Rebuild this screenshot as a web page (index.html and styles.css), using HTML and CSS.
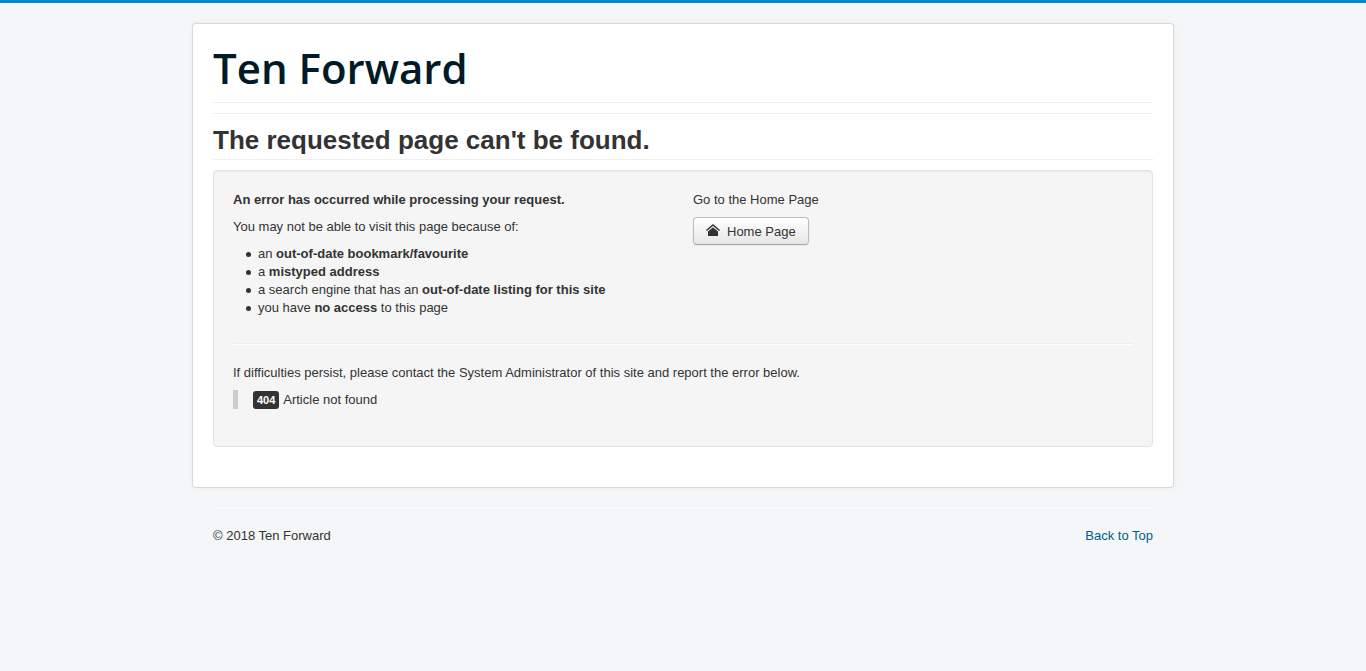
FILE: index.html
```html
<!DOCTYPE html>
<html lang="en">
<head>
<meta charset="utf-8">
<title>The requested page can't be found.</title>
<link rel="stylesheet" href="styles.css">
</head>
<body>
<div class="body" id="top">
  <div class="container">
    <header class="header"><a class="brand" href="#">Ten Forward</a></header>
    <div class="navigation"></div>
    <main>
      <h1 class="page-header">The requested page can't be found.</h1>
      <div class="well">
        <div class="row">
          <div class="col">
            <p><strong>An error has occurred while processing your request.</strong></p>
            <p>You may not be able to visit this page because of:</p>
            <ul class="reasons">
              <li>an <strong>out-of-date bookmark/favourite</strong></li>
              <li>a <strong>mistyped address</strong></li>
              <li>a search engine that has an <strong>out-of-date listing for this site</strong></li>
              <li>you have <strong>no access</strong> to this page</li>
            </ul>
          </div>
          <div class="col">
            <p>Go to the Home Page</p>
            <a class="btn" href="#"><svg class="icon" viewBox="0 0 14 14" aria-hidden="true"><path d="M0.500 7.500 7 2l6.500 5.500" fill="none" stroke="#333" stroke-width="1.500"/><path d="M7 4.300 2 8.500V13h10V8.500z"/></svg>Home Page</a>
          </div>
        </div>
        <hr>
        <p class="contact">If difficulties persist, please contact the System Administrator of this site and report the error below.</p>
        <blockquote><span class="label">404</span> Article not found</blockquote>
      </div>
    </main>
  </div>
</div>
<footer class="footer">
  <hr>
  <div class="footer-row">
    <p>© 2018 Ten Forward</p>
    <p><a href="#top">Back to Top</a></p>
  </div>
</footer>
</body>
</html>
```
FILE: styles.css
```css
* { box-sizing: border-box; }
body {
  margin: 0;
  padding: 20px;
  border-top: 3px solid #0088cc;
  background: #f4f6f7;
  color: #333;
  font: 13px/18px "Liberation Sans", Arial, sans-serif;
}
p { margin: 0 0 9px; }
a { color: #005e8d; text-decoration: none; }
.container {
  max-width: 982px;
  margin: 0 auto;
  padding: 20px 20px 40px;
  background: #fff;
  border: 1px solid rgba(0, 0, 0, 0.15);
  border-radius: 4px;
  box-shadow: 0 0 6px rgba(0, 0, 0, 0.05);
}
.header { padding-bottom: 10px; }
.brand {
  display: block;
  color: #001a27;
  font: 600 42px/48px "Open Sans", sans-serif;
}
.navigation {
  height: 12px;
  margin-bottom: 10px;
  border-top: 1px solid #eee;
  border-bottom: 1px solid #eee;
}
.page-header {
  margin: 0 0 10px;
  padding-bottom: 3px;
  border-bottom: 1px solid #eee;
  font-size: 26px;
  line-height: 32px;
}
.well {
  padding: 20px 19px 19px;
  background: #f5f5f5;
  border: 1px solid #e3e3e3;
  border-radius: 4px;
  box-shadow: inset 0 1px 1px rgba(0, 0, 0, 0.05);
}
.row { display: flex; gap: 20px; }
.col { flex: 1; }
.reasons {
  margin: 0 0 8px;
  padding-left: 13px;
  list-style: none;
}
.reasons li::before {
  content: "";
  display: inline-block;
  width: 5px;
  height: 5px;
  margin-right: 7px;
  border-radius: 50%;
  background: #333;
  vertical-align: middle;
}
hr {
  margin: 18px 0 19px;
  border: 0;
  border-top: 1px solid #eee;
  border-bottom: 1px solid #fff;
}
.contact { margin-bottom: 8px; }
blockquote {
  margin: 0 0 18px;
  padding: 1px 0 0 15px;
  border-left: 5px solid #ccc;
}
.label {
  display: inline-block;
  padding: 2px 4px;
  margin-right: 1px;
  background: #333;
  border-radius: 3px;
  color: #fff;
  font-size: 11px;
  font-weight: 700;
  line-height: 14px;
}
.btn {
  display: inline-flex;
  align-items: center;
  gap: 7px;
  padding: 5px 12px 3px;
  margin-top: -1px;
  border: 1px solid #bbb;
  border-bottom-color: #a2a2a2;
  border-radius: 4px;
  background: linear-gradient(#fff, #e6e6e6);
  box-shadow: inset 0 1px 0 rgba(255, 255, 255, 0.2), 0 1px 2px rgba(0, 0, 0, 0.05);
  color: #333;
}
.icon { width: 14px; height: 14px; margin-bottom: 4px; fill: #333; }
.footer { max-width: 940px; margin: 0 auto; }
.footer-row { display: flex; justify-content: space-between; }
```
